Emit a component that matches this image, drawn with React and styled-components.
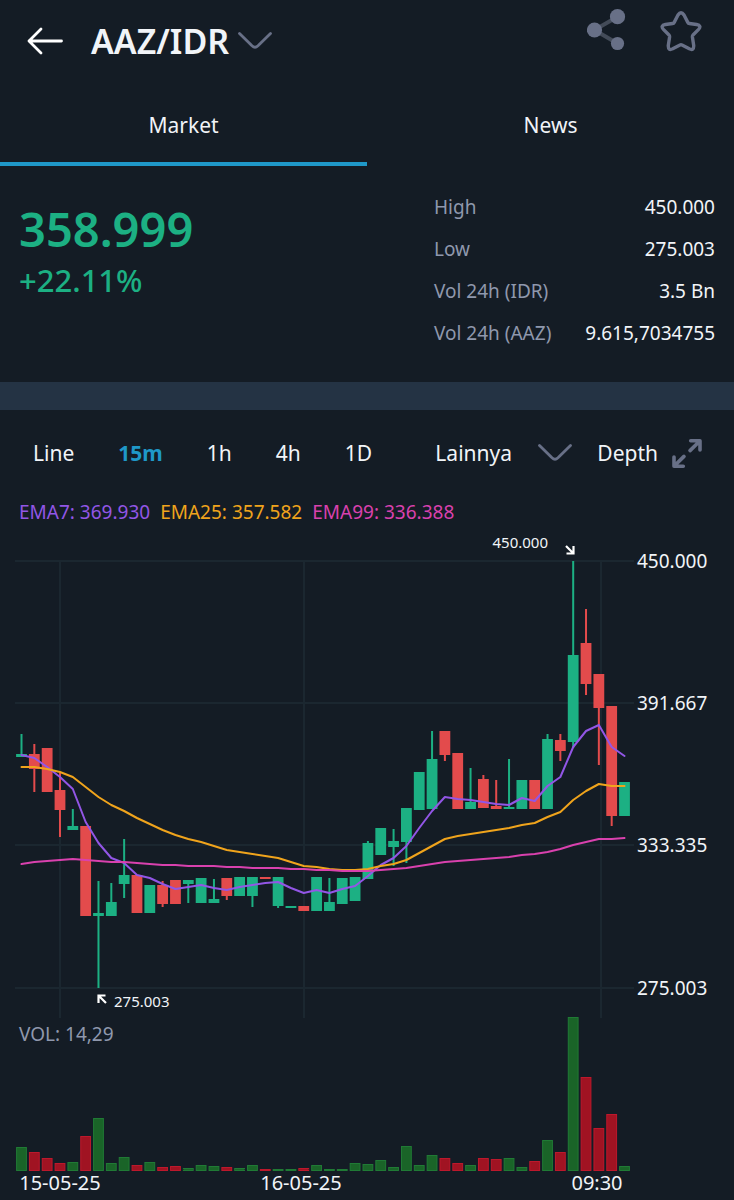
import { useState } from "react";
import styled, { createGlobalStyle } from "styled-components";

const GlobalStyle = createGlobalStyle`
  body {
    margin: 0;
    background-color: #141c25;
    color: #f1f4f8;
    font-family: "Noto Sans", "Open Sans", sans-serif;
  }

  *, *::before, *::after {
    box-sizing: border-box;
  }
`

const GREEN = '#1cb083'
const RED = '#e34b4c'
const BLUE = '#1f98c8'
const ICON = '#687087'
const PURPLE = '#9256e6'
const ORANGE = '#f0a41c'
const PINK = '#d941ae'

const Page = styled.main`
  display: flex;
  flex-direction: column;
  width: 100%;
`

const PlainButton = styled.button`
  display: flex;
  align-items: center;
  padding: 0;
  border: none;
  background: none;
  color: inherit;
  font: inherit;
  cursor: pointer;
`

const Header = styled.header`
  display: flex;
  justify-content: space-between;
  align-items: flex-start;
  height: 87px;
  padding: 9px 32px 0 27px;
`

const HeaderGroup = styled.div`
  display: flex;
  align-items: center;
  gap: ${ ({ gap }) => gap }px;
`

const PairHeading = styled.h1`
  margin: 0;
  padding-top: 10px;
  font-size: 34px;
  line-height: 44px;
  font-weight: 600;
`

const PairButton = styled(PlainButton)`
  gap: 9px;
`

const BackButton = styled(PlainButton)`
  padding-top: 10px;
`

const Tabs = styled.div`
  display: grid;
  grid-template-columns: 1fr 1fr;
`

const Tab = styled(PlainButton)`
  justify-content: center;
  height: 79px;
  border-bottom: 4px solid ${ ({ $active }) => $active ? BLUE : 'transparent' };
  font-size: 21px;
  line-height: 28px;
`

const Summary = styled.section`
  display: flex;
  justify-content: space-between;
  padding: 20px 19px 28px;
  border-bottom: 28px solid #243344;
`

const PriceColumn = styled.div`
  display: flex;
  flex-direction: column;
  padding-top: 14px;
  color: ${ GREEN };
`

const Price = styled.div`
  font-size: 47px;
  line-height: 58px;
  font-weight: 600;
`

const Change = styled.div`
  font-size: 31px;
  line-height: 44px;
  font-weight: 500;
`

const Stats = styled.dl`
  width: 281px;
  margin: 0;
`

const Stat = styled.div`
  display: flex;
  justify-content: space-between;
  font-size: 19px;
  line-height: 42px;
`

const StatName = styled.dt`
  color: #8f98ad;
`

const StatValue = styled.dd`
  margin: 0;
`

const Toolbar = styled.nav`
  display: flex;
  justify-content: space-between;
  align-items: center;
  height: 86px;
  padding: 0 32px 0 33px;
  font-size: 21px;
  line-height: 28px;
`

const Intervals = styled.div`
  display: flex;
  gap: 44px;
`

const IntervalButton = styled(PlainButton)`
  color: ${ ({ $active }) => $active ? BLUE : 'inherit' };
  font-weight: ${ ({ $active }) => $active ? 700 : 400 };
`

const ToolbarEnd = styled.div`
  display: flex;
  align-items: center;
  gap: 25px;
`

const DepthGroup = styled.div`
  display: flex;
  align-items: center;
  gap: 14px;
`

const MoreField = styled.label`
  display: grid;
  align-items: center;

  > * {
    grid-area: 1 / 1;
  }

  > svg {
    justify-self: end;
    pointer-events: none;
  }
`

const MoreSelect = styled.select`
  appearance: none;
  padding: 0 60px 0 0;
  border: none;
  background: none;
  color: inherit;
  font: inherit;
`

const Legend = styled.div`
  display: flex;
  gap: 10px;
  padding: 0 19px;
  font-size: 19px;
  line-height: 32px;
`

const LegendItem = styled.span`
  color: ${ ({ color }) => color };
`

const ChartSvg = styled.svg`
  display: block;
  width: 100%;
  height: auto;
`

const ChartText = styled.text`
  fill: ${ ({ $muted }) => $muted ? '#8f98ad' : '#f1f4f8' };
  font-size: ${ ({ $size }) => $size || 19 }px;
`

const ChevronIcon = () => (
  <svg width="34" height="18" viewBox="0 0 34 18" fill="none" stroke={ ICON } strokeWidth="2.8" strokeLinecap="round">
    <path d="M1.5 1.5 L14 13.8 Q17 16.6 20 13.8 L32.5 1.5"/>
  </svg>
)

const BackIcon = () => (
  <svg width="37" height="28" viewBox="0 0 37 28" fill="none" stroke="#fff" strokeWidth="2.8" strokeLinecap="round"
       strokeLinejoin="round">
    <path d="M14 2 L2 14 L14 26 M2 14 H34.5"/>
  </svg>
)

const ShareIcon = () => (
  <svg width="40" height="44" viewBox="0 -1 40 44">
    <path d="M30.5 6.7 L7.5 20 L30.5 33.5" fill="none" stroke="#434b58" strokeWidth="4"/>
    <circle cx="30.5" cy="6.7" r="7.6" fill={ ICON }/>
    <circle cx="7.5" cy="20" r="7.6" fill={ ICON }/>
    <circle cx="30.5" cy="33.5" r="6.6" fill={ ICON }/>
  </svg>
)

const StarIcon = () => (
  <svg width="42" height="42" viewBox="0 0 42 42" fill="none" stroke={ ICON } strokeWidth="3.4"
       strokeLinejoin="round">
    <path
      d="M14.2 12.4 L18 5 Q21 0.4 24 5 L27.8 12.4 Q28.3 13.4 29.4 13.5 L36.6 14.5 Q42 15.6 38.6 19.4 L33 25 Q32.3 25.9 32.4 27 L33.7 35.5 Q34 41 29.3 38.8 L22 35 Q21 34.5 20 35 L12.7 38.8 Q8 41 8.3 35.5 L9.6 27 Q9.7 25.9 9 25 L3.4 19.4 Q0 15.6 5.4 14.5 L12.6 13.5 Q13.7 13.4 14.2 12.4 Z"/>
  </svg>
)

const ExpandIcon = () => (
  <svg width="30" height="31" viewBox="0 0 30 31" fill="none" stroke={ ICON } strokeWidth="3.6" strokeLinecap="round"
       strokeLinejoin="round">
    <path d="M18.7 2.7 H28 V12 M27 3.7 L18 12.6"/>
    <path d="M11.3 28.3 H2 V19 M3 27.3 L12 18.4"/>
  </svg>
)

// [rising, high, body top, body bottom, low, volume], heights in chart units
const CANDLES = [
  [1, 734, 754, 757, 757, 24], [0, 744, 754, 769, 792, 19], [0, 748, 748, 792, 792, 13],
  [0, 773, 790, 810, 837, 8], [1, 809, 826, 830, 830, 9], [0, 826, 826, 916, 916, 35],
  [1, 881, 913, 916, 988, 53], [1, 883, 902, 916, 916, 8], [1, 839, 875, 884, 898, 14],
  [0, 875, 875, 913, 913, 6], [1, 885, 885, 913, 913, 9], [0, 881, 885, 904, 907, 4],
  [0, 880, 880, 904, 904, 5], [1, 880, 880, 884, 903, 3], [1, 878, 878, 903, 903, 6],
  [1, 879, 899, 903, 903, 5], [0, 878, 878, 896, 900, 4], [1, 877, 877, 896, 896, 3],
  [1, 877, 877, 896, 907, 6], [0, 877, 877, 879, 879, 2], [1, 877, 877, 906, 908, 2],
  [1, 906, 906, 908, 908, 2], [0, 906, 906, 911, 911, 3], [1, 877, 877, 911, 911, 6],
  [1, 878, 902, 911, 911, 2], [1, 878, 878, 904, 904, 2], [1, 877, 877, 901, 901, 8],
  [1, 841, 843, 879, 879, 7], [1, 828, 828, 855, 855, 11], [1, 829, 841, 847, 866, 4],
  [1, 808, 808, 842, 863, 25], [1, 772, 772, 810, 810, 6], [1, 731, 759, 809, 809, 16],
  [0, 731, 731, 755, 761, 13], [0, 753, 753, 809, 809, 8], [1, 768, 802, 809, 809, 6],
  [0, 775, 779, 808, 808, 13], [0, 780, 806, 809, 809, 12], [1, 759, 807, 809, 809, 13],
  [1, 780, 780, 809, 809, 4], [0, 780, 780, 809, 809, 10], [1, 734, 739, 809, 809, 31],
  [0, 734, 740, 751, 761, 19], [1, 561, 655, 742, 748, 154], [0, 609, 643, 684, 695, 94],
  [0, 674, 674, 708, 765, 43], [0, 706, 706, 816, 826, 57], [1, 782, 782, 816, 816, 5],
]

const EMA7 = [755, 758, 767, 777, 789, 822, 843, 858, 863, 875, 878, 884, 889, 887, 885, 888, 890, 887, 885, 883, 882,
  888, 893, 890, 893, 889, 886, 876, 865, 858, 846, 828, 811, 797, 799, 800, 802, 804, 805, 798, 801, 786, 777, 747,
  731, 725, 747, 756]

const EMA25 = [767, 767, 769, 772, 777, 787, 797, 805, 811, 818, 824, 830, 835, 839, 842, 846, 850, 852, 854, 856, 858,
  862, 866, 867, 869, 870, 870, 869, 866, 864, 860, 853, 846, 839, 836, 834, 832, 830, 828, 825, 823, 817, 812, 800,
  791, 784, 786, 786]

const EMA99 = [864, 862, 861, 860, 859, 860, 861, 862, 862, 863, 864, 865, 865, 866, 866, 866, 867, 867, 868, 868, 868,
  869, 869, 870, 870, 871, 871, 871, 870, 869, 868, 866, 864, 862, 861, 860, 859, 858, 857, 855, 854, 852, 849, 845,
  842, 839, 839, 838]

const AVERAGES = [
  { name: 'EMA7', value: '369.930', color: PURPLE, points: EMA7 },
  { name: 'EMA25', value: '357.582', color: ORANGE, points: EMA25 },
  { name: 'EMA99', value: '336.388', color: PINK, points: EMA99 },
]

const PRICE_LINES = [['450.000', 561], ['391.667', 703], ['333.335', 845], ['275.003', 988]]
const TIME_LINES = [60, 304, 601]
const TIME_LABELS = [['15-05-25', 60], ['16-05-25', 301], ['09:30', 597]]

const STATS = [
  ['High', '450.000'],
  ['Low', '275.003'],
  ['Vol 24h (IDR)', '3.5 Bn'],
  ['Vol 24h (AAZ)', '9.615,7034755'],
]

const INTERVALS = ['Line', '15m', '1h', '4h', '1D']

const VOLUME_BASE = 1171

const candleX = (index) => 21.5 + index * 12.83

const toPoints = (values) => values.map((y, i) => `${ candleX(i) },${ y }`).join(' ')

const Candle = ({ index, data: [rising, high, top, bottom, low] }) => {
  const x = candleX(index)
  const color = rising ? GREEN : RED
  return <g fill={ color }>
    <rect x={ x - 1 } y={ high } width="2" height={ low - high }/>
    <rect x={ x - 5.4 } y={ top } width="10.8" height={ bottom - top }/>
  </g>
}

const VolumeBar = ({ index, rising, volume }) => (
  <rect x={ candleX(index) - 4.9 } y={ VOLUME_BASE - volume + 0.5 } width="9.8" height={ Math.max(volume - 1, 1) }
        fill={ rising ? '#1a6428' : '#a01322' } stroke={ rising ? '#207a35' : '#bd182c' }/>
)

const Chart = () => (
  <ChartSvg viewBox="0 528 734 672" role="img" aria-label="AAZ/IDR price and volume">
    <g stroke="#1b2730" strokeWidth="2">
      { PRICE_LINES.map(([label, y]) => <line key={ label } x1="15" x2="634" y1={ y } y2={ y }/>) }
      { TIME_LINES.map(x => <line key={ x } x1={ x } x2={ x } y1="561" y2="1018"/>) }
    </g>
    { CANDLES.map((data, i) => <Candle key={ i } index={ i } data={ data }/>) }
    {
      AVERAGES.map(({ name, color, points }) => <polyline key={ name } points={ toPoints(points) } fill="none"
                                                          stroke={ color } strokeWidth="2"
                                                          strokeLinejoin="round" strokeLinecap="round"/>)
    }
    { PRICE_LINES.map(([label, y]) => <ChartText key={ label } x="637" y={ y + 7 }>{ label }</ChartText>) }
    <g fill="none" stroke="#fff" strokeWidth="2.2">
      <path d="M566 546 L573 553 M566.5 553.5 H573.5 V546"/>
      <path d="M106 1003 L99 996 M98.5 1003 V995.5 H105.5"/>
    </g>
    <ChartText $size={ 15 } x="548" y="548" textAnchor="end">450.000</ChartText>
    <ChartText $size={ 15 } x="114" y="1007">275.003</ChartText>
    <ChartText $muted x="19" y="1041">VOL: 14,29</ChartText>
    { CANDLES.map((data, i) => <VolumeBar key={ i } index={ i } rising={ data[0] } volume={ data[5] }/>) }
    {
      TIME_LABELS.map(([label, x]) => <ChartText key={ label } $size={ 20 } x={ x } y="1190"
                                                 textAnchor="middle">{ label }</ChartText>)
    }
  </ChartSvg>
)

const App = () => {
  const [tab, setTab] = useState('Market')
  const [interval, setInterval] = useState('15m')

  return (
    <Page>
      <GlobalStyle/>
      <Header>
        <HeaderGroup gap={ 27 }>
          <BackButton aria-label="Back"><BackIcon/></BackButton>
          <PairHeading>
            <PairButton>AAZ/IDR<ChevronIcon/></PairButton>
          </PairHeading>
        </HeaderGroup>
        <HeaderGroup gap={ 33 }>
          <PlainButton aria-label="Share"><ShareIcon/></PlainButton>
          <PlainButton aria-label="Add to favorites"><StarIcon/></PlainButton>
        </HeaderGroup>
      </Header>
      <Tabs role="tablist">
        {
          ['Market', 'News'].map(name => <Tab key={ name } role="tab" aria-selected={ tab === name }
                                              $active={ tab === name }
                                              onClick={ () => setTab(name) }>{ name }</Tab>)
        }
      </Tabs>
      <Summary>
        <PriceColumn>
          <Price>358.999</Price>
          <Change>+22.11%</Change>
        </PriceColumn>
        <Stats>
          {
            STATS.map(([name, value]) => <Stat key={ name }>
              <StatName>{ name }</StatName>
              <StatValue>{ value }</StatValue>
            </Stat>)
          }
        </Stats>
      </Summary>
      <Toolbar>
        <Intervals>
          {
            INTERVALS.map(name => <IntervalButton key={ name } $active={ interval === name }
                                                  onClick={ () => setInterval(name) }>{ name }</IntervalButton>)
          }
        </Intervals>
        <ToolbarEnd>
          <MoreField>
            <MoreSelect aria-label="Lainnya">
              <option>Lainnya</option>
            </MoreSelect>
            <ChevronIcon/>
          </MoreField>
          <DepthGroup>
            <PlainButton>Depth</PlainButton>
            <PlainButton aria-label="Full screen"><ExpandIcon/></PlainButton>
          </DepthGroup>
        </ToolbarEnd>
      </Toolbar>
      <Legend>
        {
          AVERAGES.map(({ name, value, color }) => <LegendItem key={ name }
                                                               color={ color }>{ name }: { value }</LegendItem>)
        }
      </Legend>
      <Chart/>
    </Page>
  );
};

export default App;
